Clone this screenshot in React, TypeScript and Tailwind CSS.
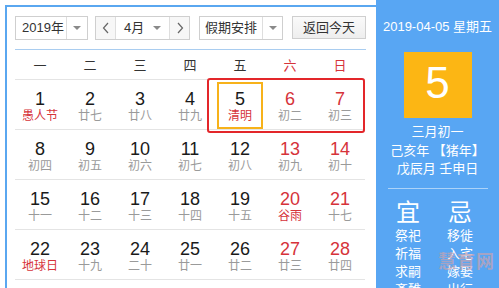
import React from "react";

type Day = { d: number; l: string; red?: boolean; lred?: boolean };

const weeks: Day[][] = [
  [
    { d: 1, l: "愚人节", lred: true },
    { d: 2, l: "廿七" },
    { d: 3, l: "廿八" },
    { d: 4, l: "廿九" },
    { d: 5, l: "清明", lred: true },
    { d: 6, l: "初二", red: true },
    { d: 7, l: "初三", red: true },
  ],
  [
    { d: 8, l: "初四" },
    { d: 9, l: "初五" },
    { d: 10, l: "初六" },
    { d: 11, l: "初七" },
    { d: 12, l: "初八" },
    { d: 13, l: "初九", red: true },
    { d: 14, l: "初十", red: true },
  ],
  [
    { d: 15, l: "十一" },
    { d: 16, l: "十二" },
    { d: 17, l: "十三" },
    { d: 18, l: "十四" },
    { d: 19, l: "十五" },
    { d: 20, l: "谷雨", red: true, lred: true },
    { d: 21, l: "十七", red: true },
  ],
  [
    { d: 22, l: "地球日", lred: true },
    { d: 23, l: "十九" },
    { d: 24, l: "二十" },
    { d: 25, l: "廿一" },
    { d: 26, l: "廿二" },
    { d: 27, l: "廿三", red: true },
    { d: 28, l: "廿四", red: true },
  ],
];

const weekdays = ["一", "二", "三", "四", "五", "六", "日"];

function Caret() {
  return <span className="h-0 w-0 border-l-[4px] border-r-[4px] border-t-[4px] border-l-transparent border-r-transparent border-t-[#8a8a8a]" />;
}

function Chevron({ dir }: { dir: "l" | "r" }) {
  return (
    <svg width="8" height="12" viewBox="0 0 8 12" fill="none" stroke="#666" strokeWidth="1.2">
      {dir === "l" ? <polyline points="6,1 1.5,6 6,11" /> : <polyline points="2,1 6.5,6 2,11" />}
    </svg>
  );
}

export default function App() {
  return (
    <div
      className="flex h-[288px] w-[499px] overflow-hidden bg-white"
      style={{ fontFamily: '"Liberation Sans", "Noto Sans CJK SC", sans-serif' }}
    >
      {/* calendar */}
      <div className="mt-[5px] ml-[5px] w-[371px] shrink-0 border-l-2 border-t-2 border-[#5aa7f0] pl-[8px] pt-[9px]">
        <div className="flex h-[24px] text-[13px] text-[#333]">
          <div className="flex w-[73px] border border-[#cfcfcf]">
            <div className="flex w-[50px] items-center justify-center pl-[4px]">2019年</div>
            <div className="flex flex-1 items-center justify-center border-l border-[#dedede]">
              <Caret />
            </div>
          </div>
          <div className="ml-[7px] flex w-[95px] border border-[#cfcfcf]">
            <div className="flex w-[20px] items-center justify-center border-r border-[#dedede] bg-[#f7f7f7]">
              <Chevron dir="l" />
            </div>
            <div className="flex flex-1 items-center pl-[8px]">
              <span>4月</span>
              <span className="ml-auto mr-[8px] flex">
                <Caret />
              </span>
            </div>
            <div className="flex w-[20px] items-center justify-center border-l border-[#dedede] bg-[#f7f7f7]">
              <Chevron dir="r" />
            </div>
          </div>
          <div className="ml-[9px] flex w-[84px] border border-[#cfcfcf]">
            <div className="flex w-[62px] items-center justify-center">假期安排</div>
            <div className="flex flex-1 items-center justify-center border-l border-[#dedede]">
              <Caret />
            </div>
          </div>
          <div className="ml-[9px] flex h-[23px] w-[74px] items-center justify-center border border-[#cfcfcf] bg-gradient-to-b from-[#fafafa] to-[#eeeeee]">
            返回今天
          </div>
        </div>

        <div className="mt-[9px] h-px w-[351px] bg-[#a9cdf0]" />

        <div className="relative w-[350px]">
          <div className="grid h-[30px] grid-cols-7 border-b border-[#e4e4e4] pt-[2px] text-[13px]">
            {weekdays.map((w, i) => (
              <div key={w} className={`flex items-center justify-center ${i >= 5 ? "text-[#d6333a]" : "text-[#333]"}`}>
                {w}
              </div>
            ))}
          </div>
          {weeks.map((week, wi) => (
            <div key={wi} className="grid h-[50px] grid-cols-7 border-b border-[#e4e4e4]">
              {week.map((day) => (
                <div key={day.d} className="flex flex-col items-center pt-[10px]">
                  <span className={`text-[18px] leading-[18px] ${day.red ? "text-[#d6333a]" : "text-[#1a1a1a]"}`}>{day.d}</span>
                  <span className={`mt-[1px] text-[12px] leading-[14px] ${day.lred ? "text-[#d6333a]" : "text-[#9a9a9a]"}`}>{day.l}</span>
                </div>
              ))}
            </div>
          ))}
          {/* weekend + today highlight */}
          <div className="absolute left-[192px] top-[28px] h-[55px] w-[158px] rounded-[3px] border-2 border-[#e3262a]" />
          <div className="absolute left-[202px] top-[32px] h-[47px] w-[46px] border-2 border-[#f7b21a]" />
        </div>
      </div>

      {/* side panel */}
      <div className="relative flex w-[123px] shrink-0 flex-col items-center overflow-hidden bg-[#58a6f3] pt-[19px] text-white [&>*]:shrink-0">
        <div className="text-[13px] leading-[16px]">2019-04-05 星期五</div>
        <div className="mt-[17px] flex h-[66px] w-[68px] items-center justify-center bg-[#fcb614] pb-[4px] text-[44px] leading-none">
          5
        </div>
        <div className="mt-[5px] text-[13px] leading-[18px]">三月初一</div>
        <div className="mt-[1px] text-[13px] leading-[18px]">己亥年 【猪年】</div>
        <div className="text-[13px] leading-[17px]">戊辰月 壬申日</div>
        <div className="mt-[11px] h-px w-[100px] bg-white/50" />
        <div className="mt-[10px] flex w-full gap-[12px] pl-[12px]">
          <div className="flex w-[40px] flex-col items-center">
            <div className="text-[24px] leading-[28px]">宜</div>
            <div className="text-[13px] leading-[18px]">祭祀</div>
            <div className="text-[13px] leading-[18px]">祈福</div>
            <div className="text-[13px] leading-[18px]">求嗣</div>
            <div className="text-[13px] leading-[18px]">斋醮</div>
          </div>
          <div className="flex w-[40px] flex-col items-center">
            <div className="text-[24px] leading-[28px]">忌</div>
            <div className="text-[13px] leading-[18px]">移徙</div>
            <div className="text-[13px] leading-[18px]">入宅</div>
            <div className="text-[13px] leading-[18px]">嫁娶</div>
            <div className="text-[13px] leading-[18px]">出行</div>
          </div>
        </div>
        <div className="absolute left-[62px] top-[249px] text-[18px] font-bold tracking-[1px] text-[#c9a3b0]/70">慧育网</div>
      </div>
    </div>
  );
}
